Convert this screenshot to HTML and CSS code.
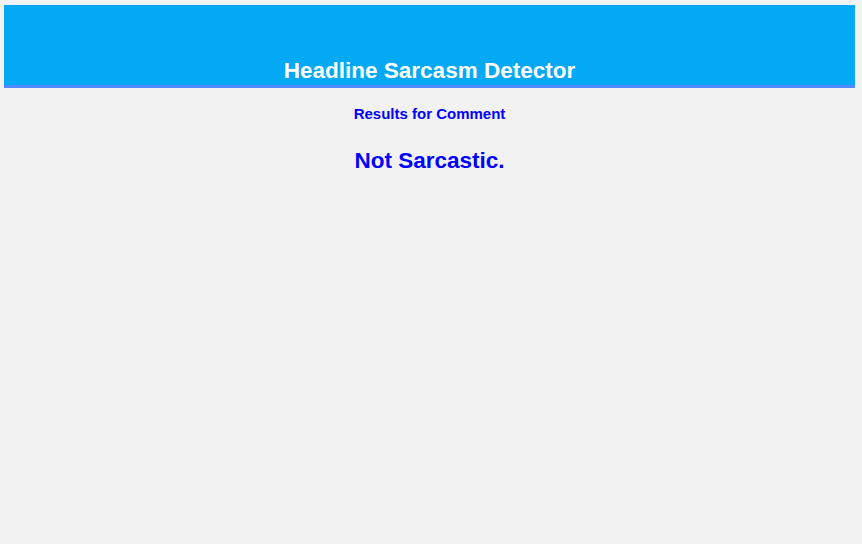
FILE: index.html
```html
<!DOCTYPE html>
<html>
<head>
<meta charset="utf-8">
<link rel="stylesheet" href="styles.css">
</head>
<body>
<header class="topbar">
  <h1 class="title">Headline Sarcasm Detector</h1>
</header>
<main class="content">
  <h3 class="subtitle">Results for Comment</h3>
  <h2 class="result">Not Sarcastic.</h2>
</main>
</body>
</html>
```

FILE: styles.css
```css
html, body {
  margin: 0;
  padding: 0;
  background: #f2f2f2;
  font-family: "Liberation Sans", Arial, sans-serif;
}
body {
  padding: 5px 7px 0 4px;
}
.topbar {
  height: 80px;
  background: #03a9f4;
  border-bottom: 3px solid #4f8bff;
  display: flex;
  align-items: flex-end;
  justify-content: center;
}
.title {
  margin: 0 0 1px 0;
  color: #ffffff;
  font-size: 22.5px;
  font-weight: bold;
  line-height: 26px;
}
.content {
  display: flex;
  flex-direction: column;
  align-items: center;
}
.subtitle {
  margin: 17px 0 0 0;
  color: #0000ff;
  font-size: 15px;
  font-weight: bold;
  line-height: 18px;
}
.result {
  margin: 25px 0 0 0;
  color: #0000ff;
  font-size: 22.5px;
  font-weight: bold;
  line-height: 26px;
}
```
